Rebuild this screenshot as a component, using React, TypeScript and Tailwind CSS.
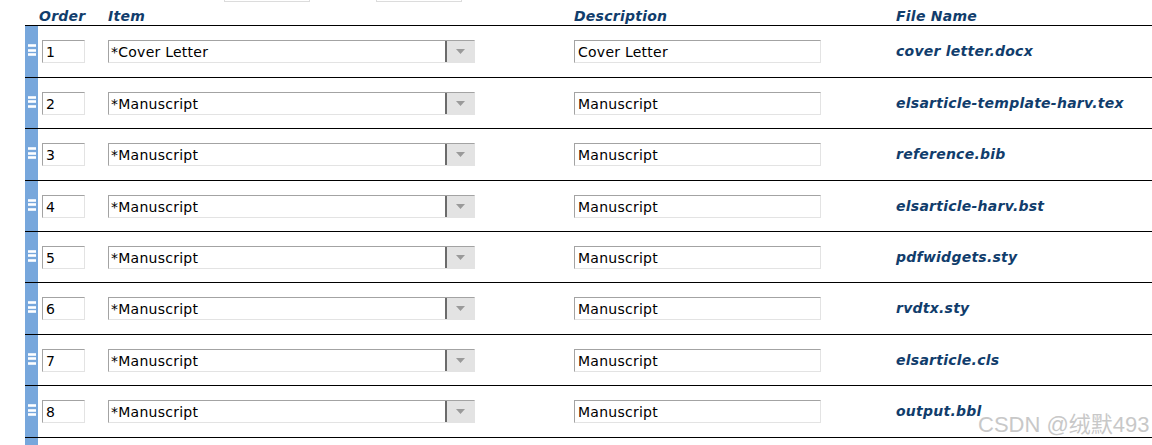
import React from "react";

const rows = [
  { n: "1", item: "*Cover Letter", desc: "Cover Letter", file: "cover letter.docx", h: "h-[52px]" },
  { n: "2", item: "*Manuscript", desc: "Manuscript", file: "elsarticle-template-harv.tex", h: "h-[51px]" },
  { n: "3", item: "*Manuscript", desc: "Manuscript", file: "reference.bib", h: "h-[52px]" },
  { n: "4", item: "*Manuscript", desc: "Manuscript", file: "elsarticle-harv.bst", h: "h-[51px]" },
  { n: "5", item: "*Manuscript", desc: "Manuscript", file: "pdfwidgets.sty", h: "h-[51px]" },
  { n: "6", item: "*Manuscript", desc: "Manuscript", file: "rvdtx.sty", h: "h-[52px]" },
  { n: "7", item: "*Manuscript", desc: "Manuscript", file: "elsarticle.cls", h: "h-[51px]" },
  { n: "8", item: "*Manuscript", desc: "Manuscript", file: "output.bbl", h: "h-[52px]" },
];

function Handle() {
  return (
    <div className="w-[13px] self-stretch bg-[#77a7dc] flex flex-col items-center justify-center pb-[3px]">
      <div className="w-[8px] h-[3px] bg-white border-y border-[#e4eefa]" />
      <div className="w-[8px] h-[3px] bg-white border-y border-[#e4eefa] mt-[1.5px]" />
      <div className="w-[8px] h-[3px] bg-white border-y border-[#e4eefa] mt-[1.5px]" />
    </div>
  );
}

export default function App() {
  const font = { fontFamily: '"DejaVu Sans", Verdana, sans-serif' };
  return (
    <div className="relative w-[1152px] h-[445px] bg-white overflow-hidden" style={font}>
      {/* faint boxes cut off at the top */}
      <div className="absolute left-[224px] top-[-10px] w-[86px] h-[12px] border border-[#dcdcdc] bg-white" />
      <div className="absolute left-[376px] top-[-10px] w-[86px] h-[12px] border border-[#dcdcdc] bg-white" />

      <div className="ml-[25px]">
        {/* header */}
        <div className="flex h-[26px] border-b border-black text-[14px] tracking-[0.25px] font-bold italic text-[#113d6c] items-end leading-[16px] pb-[1px]">
          <div className="w-[13px]" />
          <div className="w-[70px] pl-[1px]">Order</div>
          <div className="w-[466px]">Item</div>
          <div className="w-[322px]">Description</div>
          <div className="flex-1">File Name</div>
        </div>

        {rows.map((r) => (
          <div key={r.n} className={`flex items-center border-b border-black ${r.h}`}>
            <Handle />
            <div className="w-[70px] pl-[4px]">
              <div className="w-[43px] h-[23px] border border-t-[#a3a3a3] border-l-[#a3a3a3] border-r-[#e3e3e3] border-b-[#e3e3e3] text-[14px] tracking-[0.25px] text-black leading-[22px] pl-[3px]">
                {r.n}
              </div>
            </div>
            <div className="w-[466px]">
              <div className="w-[367px] h-[23px] flex border border-t-[#a3a3a3] border-l-[#a3a3a3] border-r-[#e3e3e3] border-b-[#e3e3e3]">
                <div className="flex-1 text-[14px] tracking-[0.25px] text-black leading-[22px] pl-[2px]">{r.item}</div>
                <div className="w-[29px] h-full bg-[#e3e3e3] border-l-2 border-[#6b6b6b] flex items-center justify-center">
                  <svg width="9" height="5" viewBox="0 0 9 5">
                    <path d="M0 0 L9 0 L4.5 5 Z" fill="#9a9a9a" />
                  </svg>
                </div>
              </div>
            </div>
            <div className="w-[322px]">
              <div className="w-[247px] h-[23px] border border-t-[#a3a3a3] border-l-[#a3a3a3] border-r-[#e3e3e3] border-b-[#e3e3e3] text-[14px] tracking-[0.25px] text-black leading-[22px] pl-[3px]">
                {r.desc}
              </div>
            </div>
            <div className="flex-1 text-[14px] tracking-[0.25px] font-bold italic text-[#113d6c]">{r.file}</div>
          </div>
        ))}

        {/* partial next row */}
        <div className="flex h-[20px]">
          <div className="w-[13px] bg-[#77a7dc]" />
        </div>
      </div>

      <div
        className="absolute left-[978px] top-[410px] text-[22px] text-[#c8c8c8] leading-[30px]"
        style={{ fontFamily: '"Liberation Sans", "Noto Sans CJK SC", sans-serif' }}
      >
        CSDN @绒默493
      </div>
    </div>
  );
}
